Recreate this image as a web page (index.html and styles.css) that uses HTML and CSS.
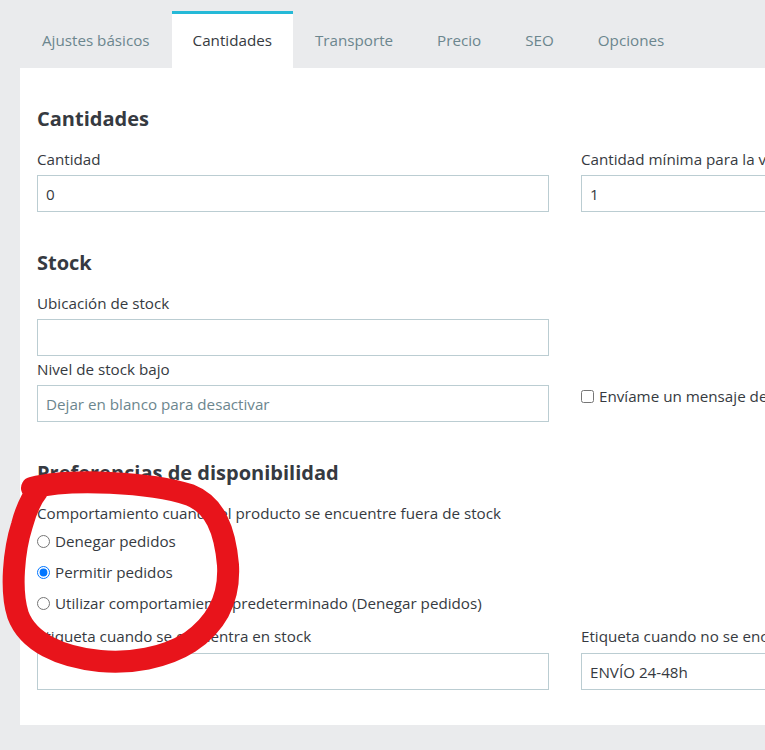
FILE: index.html
```html
<!DOCTYPE html>
<html lang="es">
<head>
<meta charset="utf-8">
<title>Cantidades</title>
<link rel="stylesheet" href="styles.css">
</head>
<body>
<nav class="tabs">
  <div class="tab">Ajustes básicos</div>
  <div class="tab active">Cantidades</div>
  <div class="tab">Transporte</div>
  <div class="tab">Precio</div>
  <div class="tab">SEO</div>
  <div class="tab">Opciones</div>
</nav>
<main class="panel">
  <section class="section">
    <h2>Cantidades</h2>
    <div class="row">
      <div class="group">
        <label class="label">Cantidad</label>
        <input class="input" type="text" value="0">
      </div>
      <div class="group">
        <label class="label">Cantidad mínima para la venta</label>
        <input class="input" type="text" value="1">
      </div>
    </div>
  </section>
  <section class="section">
    <h2>Stock</h2>
    <div class="row">
      <div class="group">
        <label class="label">Ubicación de stock</label>
        <input class="input" type="text" value="">
      </div>
    </div>
    <div class="row row-tight">
      <div class="group">
        <label class="label">Nivel de stock bajo</label>
        <input class="input" type="text" placeholder="Dejar en blanco para desactivar">
      </div>
      <div class="group check-group">
        <label class="check"><input type="checkbox"> Envíame un mensaje de correo electrónico cuando la cantidad sea inferior</label>
      </div>
    </div>
  </section>
  <section class="section">
    <h2>Preferencias de disponibilidad</h2>
    <div class="label">Comportamiento cuando el producto se encuentre fuera de stock</div>
    <label class="radio"><input type="radio" name="oos"> Denegar pedidos</label>
    <label class="radio"><input type="radio" name="oos" checked> Permitir pedidos</label>
    <label class="radio"><input type="radio" name="oos"> Utilizar comportamiento predeterminado (Denegar pedidos)</label>
    <div class="row row-after-radios">
      <div class="group">
        <label class="label">Etiqueta cuando se encuentra en stock</label>
        <input class="input" type="text" value="">
      </div>
      <div class="group">
        <label class="label">Etiqueta cuando no se encuentra en stock</label>
        <input class="input" type="text" value="ENVÍO 24-48h">
      </div>
    </div>
  </section>
</main>
<svg class="scribble" width="765" height="750" viewBox="0 0 765 750" aria-hidden="true">
  <path d="M 32 488 C 70 478, 150 482, 190 495 C 215 505, 225 530, 228 565 C 230 600, 215 625, 190 642 C 165 658, 130 664, 100 661 C 60 657, 28 642, 18 615 C 10 590, 14 550, 22 525 C 26 510, 30 500, 38 490" fill="none" stroke="#e8141b" stroke-width="22" stroke-linecap="round" stroke-linejoin="round"/>
</svg>
</body>
</html>
```
FILE: styles.css
```css
* { box-sizing: border-box; }
html, body { margin: 0; padding: 0; }
body {
  position: relative;
  width: 765px;
  height: 750px;
  overflow: hidden;
  background: #eaebed;
  font-family: "Open Sans", "DejaVu Sans", sans-serif;
  color: #363a41;
  font-size: 15.2px;
}
.tabs {
  display: flex;
  margin-left: 20px;
  padding-top: 11px;
}
.tab {
  height: 57px;
  padding: 0 22px 2px;
  display: flex;
  align-items: center;
  border-top: 3px solid transparent;
  color: #6c868e;
  font-size: 15.2px;
  white-space: nowrap;
}
.tab.active {
  background: #fff;
  border-top-color: #25b9d7;
  color: #363a41;
  padding: 0 21px 2px;
}
.panel {
  margin-left: 20px;
  width: 1150px;
  height: 657px;
  background: #fff;
  padding: 38px 17px 35px;
}
.section + .section { margin-top: 38px; }
.section h2 {
  margin: 0 0 17px;
  font-size: 20px;
  line-height: 26px;
  font-weight: 700;
  color: #363a41;
}
.row {
  display: grid;
  grid-template-columns: 512px 512px;
  column-gap: 32px;
}
.row-tight { margin-top: 3px; }
.label {
  display: block;
  line-height: 20px;
  margin-bottom: 6px;
  white-space: nowrap;
}
.input {
  display: block;
  width: 100%;
  height: 37px;
  border: 1px solid #bbcdd2;
  border-radius: 0;
  padding: 0 8px;
  font-family: inherit;
  font-size: 15.2px;
  color: #363a41;
  background: #fff;
}
.input::placeholder { color: #6c868e; opacity: 1; }
.check-group { padding-top: 27px; }
.check, .radio {
  display: flex;
  align-items: center;
  gap: 5px;
  line-height: 20px;
  white-space: nowrap;
}
.check input, .radio input {
  margin: 0;
  width: 13px;
  height: 13px;
  flex: none;
}
.radio { margin-top: 11px; }
.label + .radio { margin-top: 8px; }
.row-after-radios { margin-top: 13px; }
.row-after-radios .label { margin-bottom: 7px; }
.scribble {
  position: absolute;
  left: 0;
  top: 0;
  pointer-events: none;
}
```
